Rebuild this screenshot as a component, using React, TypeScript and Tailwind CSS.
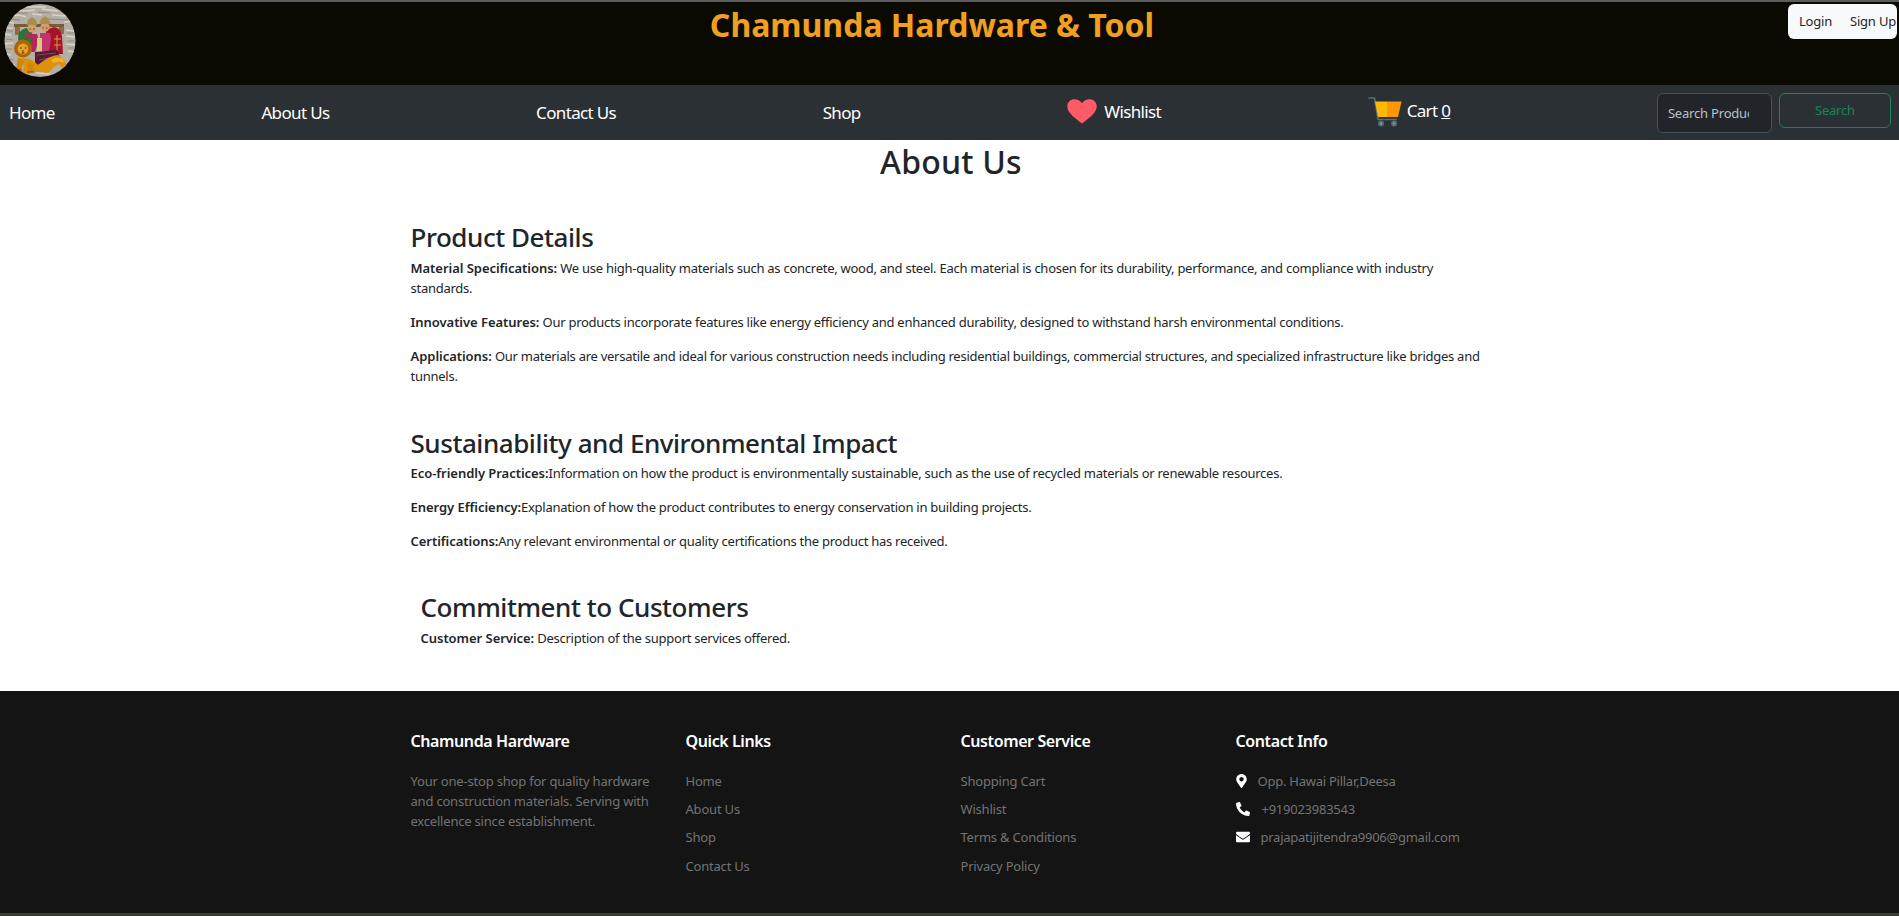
import { FaMapMarkerAlt, FaPhoneAlt, FaEnvelope } from "react-icons/fa";

function Logo() {
  return (
    <svg viewBox="0 0 72 73" className="w-[72px] h-[73px] shrink-0">
      <defs>
        <clipPath id="c"><ellipse cx="36" cy="36.5" rx="35.5" ry="36.5" /></clipPath>
      </defs>
      <g clipPath="url(#c)">
        <rect width="72" height="73" fill="#b4afa5" />
        <path d="M8 6l14 1 9-1M38 5l16 2M4 12l11-1 7 2M28 10l10 1M48 11l15 1M1 18l9 1M60 18l10-1M0 30l7 1M62 32l9 1M0 40l9-1M62 40l10 1M1 50l6 1M64 47l7 1M3 60l8 1M32 69l14 1M22 3l20 0M62 26l8 1M1 24l8 0" stroke="#d6d2c9" strokeWidth="1.5" fill="none" />
        <path d="M12 9l12 0M34 8l12 1M2 15l14 1M44 15l20 1M3 27l6 0M63 29l7 0M2 35l7 1M64 37l6 0M2 45l6 0M64 44l7 0M4 55l6 1M34 67l10 0" stroke="#8a867c" strokeWidth="0.9" fill="none" />
        <rect x="10" y="20" width="50" height="3" fill="#7b5a36" />
        <path d="M11 23h5v8h-5zM55 23h5v7h-5z" fill="#8c6a44" />
        <path d="M14 34q0-8 8-10l6 2 1 22H16z" fill="#2a7437" />
        <path d="M42 26l8-3q7 1 8 9l1 18H44z" fill="#a81228" />
        <path d="M53 31v16M50 35h7M50 41h7" stroke="#d9a94a" strokeWidth="0.9" />
        <path d="M22 30h11l2 6-4 12H24z" fill="#b5265a" />
        <path d="M36 29h10l1 6-2 12h-9z" fill="#c4346a" />
        <rect x="33" y="34" width="5" height="14" fill="#d9ca80" />
        <rect x="24" y="33" width="4" height="10" fill="#2a7437" />
        <circle cx="28" cy="24" r="4.6" fill="#d79a6a" />
        <circle cx="41" cy="23" r="4.6" fill="#d79a6a" />
        <path d="M22.5 21l1.5-5 4-3 4 3 1.5 5zM35.5 20l1.5-5 4-3 4 3 1.5 5z" fill="#a98e4c" />
        <path d="M25.5 25h1.5M29 25h1.5M38.5 24h1.5M42 24h1.5" stroke="#4a2a12" strokeWidth="0.8" />
        <path d="M31 48l22-2 3 7-8 7-6 3-11-3z" fill="#541a36" />
        <path d="M33 51l19-2M35 56l15-3" stroke="#94526a" strokeWidth="0.8" />
        <path d="M15 55q11-3 19 6q12-10 20-10q6 3 8 9l1 5q-3 1-5-1l-3-4-5 3-5 5q-3 2-6 0l-11 0-3 2h-7l2-8z" fill="#dd920a" />
        <path d="M47 56q6-4 12-1l1 4q-5-3-11 0z" fill="#f4b12e" />
        <circle cx="19" cy="44.5" r="9" fill="#a9640c" />
        <circle cx="19" cy="45" r="5.4" fill="#e6a326" />
        <path d="M16 44h2M20.5 44h2M17.5 49h3M19 46v3" stroke="#5c3204" strokeWidth="0.9" />
        <path d="M14 53l-2 13h5l3-9zM24 58l-1 10h6l1-8z" fill="#d28507" />
        <path d="M12 66h6M23 68h7" stroke="#7a4706" strokeWidth="1" />
      </g>
    </svg>
  );
}

function Heart() {
  return (
    <svg viewBox="0 0 30 25" className="w-[30px] h-[25px] shrink-0">
      <path d="M15 24.5C9 20 0.3 14 0.3 7.5 0.3 3 3.5 0.3 7.5 0.3c3 0 5.8 1.4 7.5 4 1.7-2.6 4.5-4 7.5-4 4 0 7.2 2.7 7.2 7.2C29.7 14 21 20 15 24.5z" fill="#ff5a67" />
    </svg>
  );
}

function Cart() {
  return (
    <svg viewBox="0 0 34 30" className="w-[34px] h-[30px] shrink-0">
      <path d="M0.5 1H6.5L10 22.5H29" fill="none" stroke="#546e7a" strokeWidth="1.6" />
      <path d="M7 4.5H19V20H10z" fill="#ffb900" />
      <path d="M19 4.5H33.5L30 20H19z" fill="#ff9800" />
      <circle cx="13" cy="26.5" r="3" fill="#546e7a" />
      <circle cx="26" cy="26.5" r="3" fill="#546e7a" />
      <circle cx="13" cy="26.5" r="1" fill="#90a4ae" />
      <circle cx="26" cy="26.5" r="1" fill="#90a4ae" />
    </svg>
  );
}

function P({ b, t }: { b: string; t: string }) {
  return (
    <p className="text-[13px] leading-[20px] mb-[14px] text-[#212529] tracking-[-0.26px]">
      <b className="font-semibold tracking-[-0.04px]">{b}</b>
      {t}
    </p>
  );
}

function H2({ children }: { children: string }) {
  return <h2 className="text-[26px] leading-[32px] font-medium text-[#212529] tracking-[-0.45px]">{children}</h2>;
}

function FootHead({ children }: { children: string }) {
  return <h5 className="text-[16px] leading-[20px] font-semibold text-white mb-[20px] tracking-[-0.4px]">{children}</h5>;
}

function FootCol({ title, items }: { title: string; items: string[] }) {
  return (
    <div className="w-[275px] px-[11px]">
      <FootHead>{title}</FootHead>
      <ul className="flex flex-col gap-[8.2px]">
        {items.map((i) => (
          <li key={i} className="text-[13px] leading-[20px] text-[#737373]">{i}</li>
        ))}
      </ul>
    </div>
  );
}

export default function App() {
  return (
    <div className="font-['Noto_Sans',sans-serif] bg-white tracking-[-0.2px]">
      <header className="h-[85px] bg-[#0b0a02] border-t-2 border-[#5c5c5c] flex justify-between items-start pl-1 pr-[2px]">
        <div className="pt-[2px]"><Logo /></div>
        <h1 className="text-[32px] leading-[46px] font-bold text-[#f0a020] tracking-[0px]">Chamunda Hardware &amp; Tool</h1>
        <div className="mt-[2px] w-[109px] h-[35px] bg-[#f8f9fa] rounded-md flex items-center justify-between pl-[11px] text-[13px] text-[#212529]">
          <span>Login</span>
          <span className="pr-[1px]">Sign Up</span>
        </div>
      </header>
      <nav className="h-[55px] bg-[#2b3035] flex justify-between items-center pl-[9px] pr-[8px] text-white text-[17px] tracking-[-0.65px]">
        <span className="mt-[1px]">Home</span>
        <span className="mt-[1px]">About Us</span>
        <span className="mt-[1px]">Contact Us</span>
        <span className="mt-[1px]">Shop</span>
        <span className="flex items-center gap-[7px] -mt-[2px]"><Heart />Wishlist</span>
        <span className="flex items-center gap-[5px] -mt-[1px]"><Cart /><span className="-mt-[2px]">Cart <u>0</u></span></span>
        <form className="flex items-start gap-[7px] mt-[1px] tracking-[-0.2px]">
          <input
            readOnly
            placeholder="Search Products"
            className="w-[115px] h-[40px] pl-[10px] pr-[22px] rounded-md bg-[#212529] border border-[#495057] text-[13px] placeholder:text-[#bcc1c6] outline-none"
          />
          <button type="button" className="w-[112px] h-[35px] rounded-md border border-[#198754] text-[#198754] text-[13px]">Search</button>
        </form>
      </nav>
      <main className="h-[551px] w-[1100px] mx-auto px-[11px]">
        <h1 className="text-[32px] leading-[43px] font-medium text-center text-[#212529] pl-[3px] tracking-[0.2px]">About Us</h1>
        <section className="mt-[38px]">
          <H2>Product Details</H2>
          <div className="mt-[5px]">
            <P b="Material Specifications:" t=" We use high-quality materials such as concrete, wood, and steel. Each material is chosen for its durability, performance, and compliance with industry standards." />
            <P b="Innovative Features:" t=" Our products incorporate features like energy efficiency and enhanced durability, designed to withstand harsh environmental conditions." />
            <P b="Applications:" t=" Our materials are versatile and ideal for various construction needs including residential buildings, commercial structures, and specialized infrastructure like bridges and tunnels." />
          </div>
        </section>
        <section className="mt-[41px]">
          <H2>Sustainability and Environmental Impact</H2>
          <div className="mt-[4px]">
            <P b="Eco-friendly Practices:" t="Information on how the product is environmentally sustainable, such as the use of recycled materials or renewable resources." />
            <P b="Energy Efficiency:" t="Explanation of how the product contributes to energy conservation in building projects." />
            <P b="Certifications:" t="Any relevant environmental or quality certifications the product has received." />
          </div>
        </section>
        <section className="mt-[40px] pl-[10px]">
          <H2>Commitment to Customers</H2>
          <div className="mt-[5px]">
            <P b="Customer Service:" t=" Description of the support services offered." />
          </div>
        </section>
      </main>
      <footer className="h-[225px] bg-[#141414] border-b-[3px] border-[#3a4030] pt-[40px]">
        <div className="w-[1100px] mx-auto flex">
          <div className="w-[275px] px-[11px]">
            <FootHead>Chamunda Hardware</FootHead>
            <p className="text-[13px] leading-[20px] text-[#737373]">Your one-stop shop for quality hardware and construction materials. Serving with excellence since establishment.</p>
          </div>
          <FootCol title="Quick Links" items={["Home", "About Us", "Shop", "Contact Us"]} />
          <FootCol title="Customer Service" items={["Shopping Cart", "Wishlist", "Terms & Conditions", "Privacy Policy"]} />
          <div className="w-[275px] px-[11px]">
            <FootHead>Contact Info</FootHead>
            <ul className="flex flex-col gap-[8.2px] text-[13px] leading-[20px] text-[#737373] tracking-[-0.25px]">
              <li className="flex items-center"><FaMapMarkerAlt className="text-white w-[11px] h-[14px] mr-[11px]" />Opp. Hawai Pillar,Deesa</li>
              <li className="flex items-center"><FaPhoneAlt className="text-white w-[14px] h-[14px] mr-[12px]" />+919023983543</li>
              <li className="flex items-center"><FaEnvelope className="text-white w-[14px] h-[14px] mr-[11px]" />prajapatijitendra9906@gmail.com</li>
            </ul>
          </div>
        </div>
      </footer>
    </div>
  );
}
